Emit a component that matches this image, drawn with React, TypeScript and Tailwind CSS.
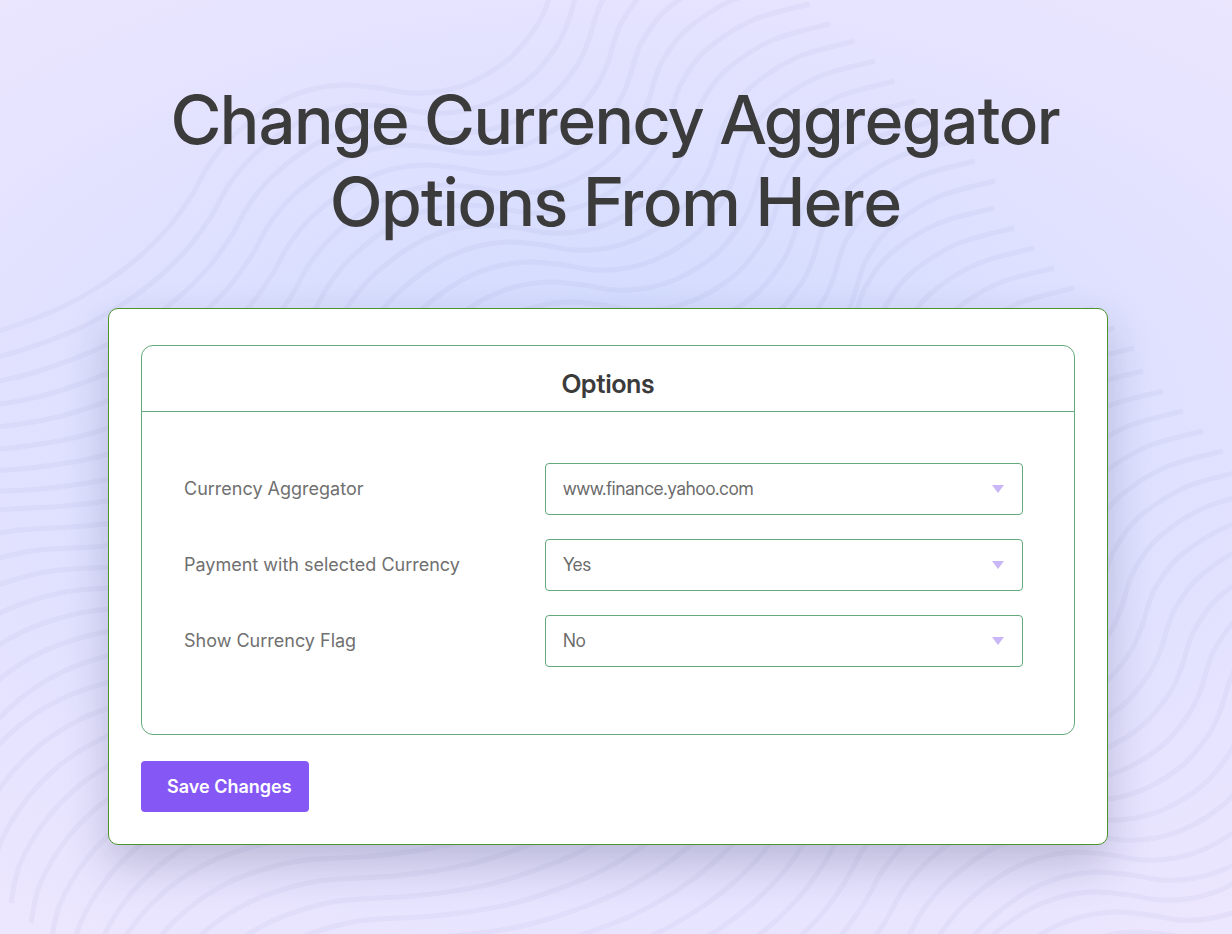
import * as React from "react"

interface Field {
  id: string;
  label: string;
  options: string[];
}

const FIELDS: Field[] = [
  { id: "aggregator", label: "Currency Aggregator", options: ["www.finance.yahoo.com"] },
  { id: "payment", label: "Payment with selected Currency", options: ["Yes", "No"] },
  { id: "flag", label: "Show Currency Flag", options: ["No", "Yes"] },
];

// One wave, measured from its upper right end
const WAVE: [number, number][] = [
  [0, 0], [-57, 16], [-104, 46], [-127, 76], [-136, 98], [-142, 118], [-154, 143], [-180, 174],
  [-216, 197], [-248, 207], [-280, 209], [-312, 204], [-347, 201], [-384, 207], [-418, 222],
  [-455, 250], [-480, 279], [-498, 311], [-522, 344], [-551, 373], [-584, 398], [-630, 424],
  [-691, 447], [-731, 457], [-790, 465], [-856, 469], [-895, 477], [-935, 492], [-974, 517],
  [-1008, 552], [-1034, 596], [-1043, 635],
];

// Runs of equally spaced waves: first end point and number of waves
const RUNS: [number, number, number][] = [
  [690, -116, 8],
  [855, 41, 8],
  [994, 208, 8],
  [1143, 371, 16],
  [1441, 691, 16],
];

const STEP = 20;

function smoothPath(points: [number, number][]) {
  let d = `M${points[0][0]} ${points[0][1]}`;
  for (let i = 0; i < points.length - 1; i++) {
    const p0 = points[i - 1] ?? points[i];
    const p1 = points[i];
    const p2 = points[i + 1];
    const p3 = points[i + 2] ?? p2;
    d += `C${p1[0] + (p2[0] - p0[0]) / 6} ${p1[1] + (p2[1] - p0[1]) / 6} ${p2[0] - (p3[0] - p1[0]) / 6} ${p2[1] - (p3[1] - p1[1]) / 6} ${p2[0]} ${p2[1]}`;
  }
  return d;
}

const WAVE_PATH = smoothPath(WAVE);

function Waves() {
  return (
    <svg
      className="absolute inset-0 h-full w-full"
      viewBox="0 0 1232 934"
      preserveAspectRatio="xMidYMid slice"
      fill="none"
      aria-hidden="true"
    >
      <g stroke="#3c4682" strokeOpacity="0.042" strokeWidth="5">
        {RUNS.map(([x, y, count]) =>
          Array.from({ length: count }, (_, i) => (
            <path key={`${x}-${i}`} d={WAVE_PATH} transform={`translate(${x + i * STEP} ${y + i * STEP})`} />
          ))
        )}
      </g>
    </svg>
  );
}

function SelectField({ id, label, options }: Field) {
  const [value, setValue] = React.useState(options[0]);

  return (
    <div className="grid grid-cols-[361fr_478fr] items-center">
      <label htmlFor={id} className="text-lg text-[#707070]">
        {label}
      </label>
      <div className="relative">
        <select
          id={id}
          value={value}
          onChange={(e) => setValue(e.target.value)}
          className="h-[52px] w-full appearance-none rounded border border-[#62aa7b] bg-white pl-[17px] pr-12 font-['Inter_Display','Inter','Liberation_Sans',sans-serif] text-lg text-[#6b6b6b] outline-none"
        >
          {options.map((option) => (
            <option key={option}>{option}</option>
          ))}
        </select>
        <svg
          className="pointer-events-none absolute right-[19px] top-[22px] h-2 w-3"
          viewBox="0 0 12 8"
          fill="#c9b6f6"
          aria-hidden="true"
        >
          <path d="M0 0h12L6 8z" />
        </svg>
      </div>
    </div>
  );
}

export default function App() {
  return (
    <div className="relative min-h-screen overflow-hidden bg-[radial-gradient(ellipse_74%_57%_at_50%_47%,#d0dafe_0%,#d6ddfe_32%,#dde0ff_52%,#e2e2ff_72%,#e7e4ff_88%,#ece6fe_112%)] font-['Inter','Liberation_Sans',sans-serif]">
      <Waves />
      <main className="relative">
        <h1 className="px-8 pt-[78px] text-center font-['Inter_Display','Inter','Liberation_Sans',sans-serif] text-[68px] font-medium leading-[82px] text-[#3b3b3b]">
          Change Currency Aggregator
          <br />
          Options From Here
        </h1>

        <div className="pb-[88px] pl-[108px] pr-[124px] pt-[66px]">
          <form
            onSubmit={(e) => e.preventDefault()}
            className="rounded-[10px] border border-[#4b932e] bg-white px-8 pb-8 pt-9 shadow-[0_20px_44px_rgba(40,40,80,0.22)]"
          >
            <section className="rounded-xl border border-[#62aa7b]">
              <h2 className="border-b border-[#62aa7b] pb-[11px] pt-[22px] text-center font-['Inter_Display','Inter','Liberation_Sans',sans-serif] text-[26px] font-semibold leading-8 text-[#3b3b3b]">
                Options
              </h2>
              <div className="flex flex-col gap-6 pb-[67px] pl-[42px] pr-[51px] pt-[51px]">
                {FIELDS.map((field) => (
                  <SelectField key={field.id} {...field} />
                ))}
              </div>
            </section>

            <button
              type="submit"
              className="mt-[26px] h-[51px] cursor-pointer rounded bg-[#8558f6] pl-[26px] pr-[17px] text-lg font-semibold text-white"
            >
              Save Changes
            </button>
          </form>
        </div>
      </main>
    </div>
  );
}
